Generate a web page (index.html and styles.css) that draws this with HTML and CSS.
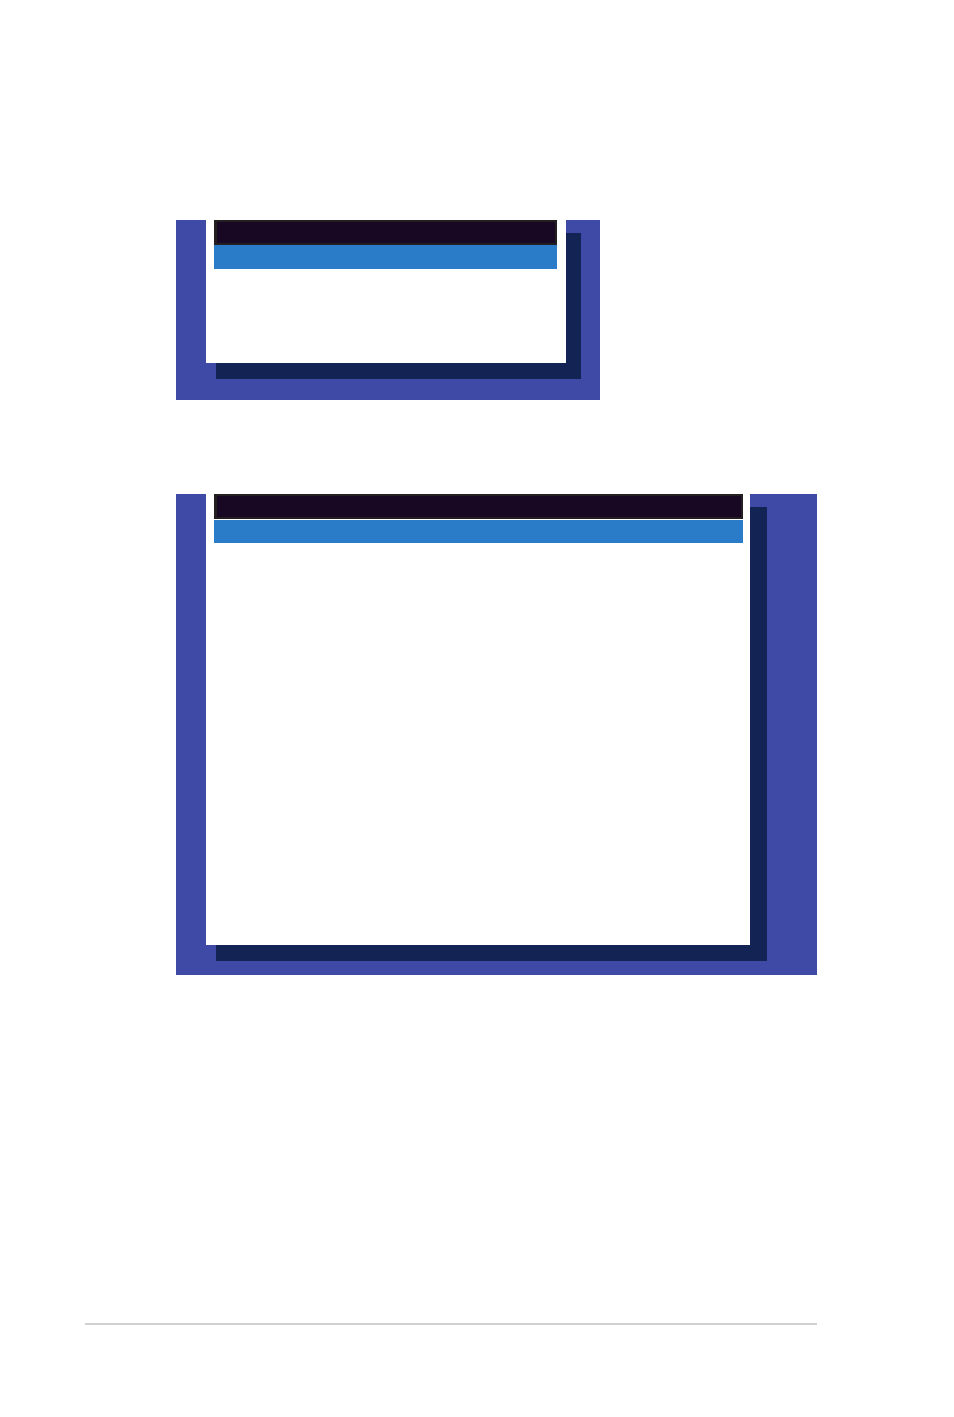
FILE: index.html
```html
<!DOCTYPE html>
<html lang="en">
<head>
    <meta charset="UTF-8">
    <meta name="viewport" content="width=device-width, initial-scale=1.0">
    <link rel="stylesheet" href="styles.css">
</head>
<body>
    <main class="page">
        <div class="screens">
            <section class="screen small">
                <div class="shadow">
                    <div class="menu">
                        <div class="title"></div>
                        <div class="selected"></div>
                    </div>
                </div>
            </section>
            <section class="screen large">
                <div class="shadow">
                    <div class="menu">
                        <div class="title"></div>
                        <div class="selected"></div>
                    </div>
                </div>
            </section>
        </div>
        <footer class="footer"></footer>
    </main>
</body>
</html>
```

FILE: styles.css
```css
* {
    box-sizing: border-box;
}

body {
    margin: 0;
    background-color: #fff;
    font-family: "Liberation Sans", Arial, sans-serif;
}

.page {
    display: flex;
    flex-direction: column;
    min-height: 100vh;
    padding: 220px 137px 92px 85px;
}

.screens {
    display: flex;
    flex-direction: column;
    gap: 94px;
    flex: 1;
    padding-left: 91px;
}

.screen {
    background-color: #3f4aa6;
}

.small {
    width: 100%;
    max-width: 424px;
    padding: 0 19px 21px 30px;
}

.large {
    padding: 0 50px 14px 30px;
}

/* dark drop shadow, shifted right and down behind the menu */
.shadow {
    padding: 0 15px 16px 0;
    background: linear-gradient(#132353, #132353) 10px 13px no-repeat;
}

.large .shadow {
    padding-right: 17px;
}

.menu {
    min-height: 143px;
    padding: 0 9px 0 8px;
    background-color: #fff;
}

.large .menu {
    min-height: 451px;
    padding-right: 7px;
}

.title {
    height: 25px;
    background-color: #180824;
    border: 2px solid #231f20;
    border-left-width: 3px;
}

.selected {
    height: 24px;
    background-color: #2a7bc8;
}

.large .selected {
    border-top: 1px solid #fff;
}

.footer {
    border-top: 2px solid #d0d0d0;
}
```
